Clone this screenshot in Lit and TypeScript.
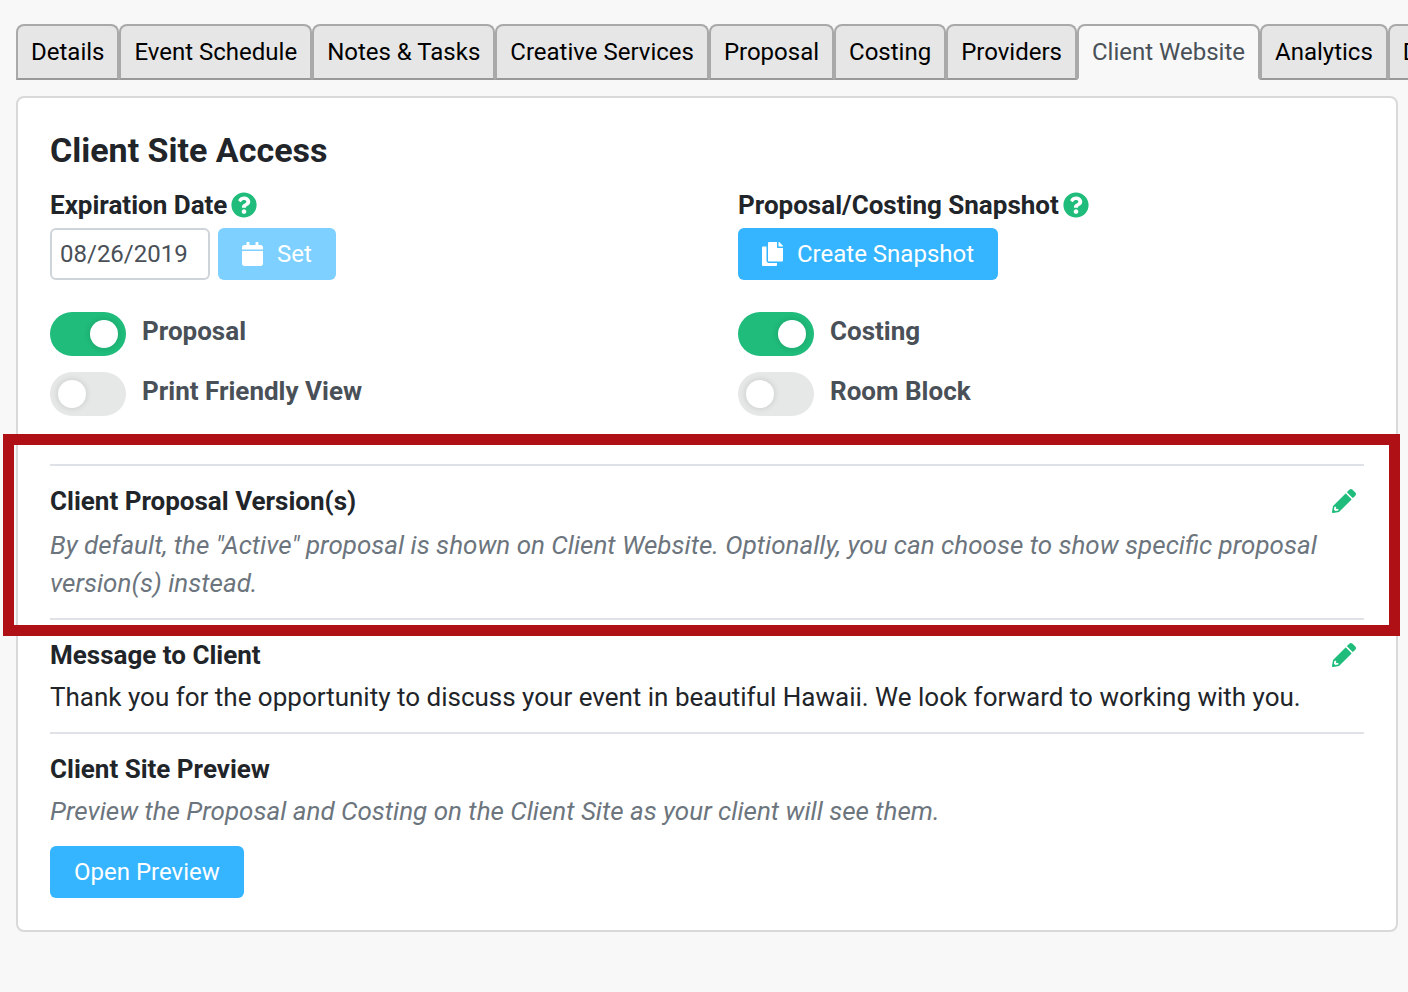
import { LitElement, html, css, svg } from "lit";
import { customElement, property, state } from "lit/decorators.js";
import { classMap } from "lit/directives/class-map.js";

const icons = {
  help: {
    box: "0 0 512 512",
    d: "M504 256c0 136.997-111.043 248-248 248S8 392.997 8 256C8 119.083 119.043 8 256 8s248 111.083 248 248zM262.655 90c-54.497 0-89.255 22.957-116.549 63.758-3.536 5.286-2.353 12.415 2.715 16.258l34.699 26.31c5.205 3.947 12.621 3.008 16.665-2.122 17.864-22.658 30.113-35.797 57.303-35.797 20.429 0 45.698 13.148 45.698 32.958 0 14.976-12.363 22.667-32.534 33.976C247.128 238.528 216 254.941 216 296v4c0 6.627 5.373 12 12 12h56c6.627 0 12-5.373 12-12v-1.333c0-28.462 83.186-29.647 83.186-106.667 0-58.002-60.165-102-116.531-102zM256 338c-25.365 0-46 20.635-46 46 0 25.364 20.635 46 46 46s46-20.636 46-46c0-25.365-20.635-46-46-46z",
  },
  calendar: {
    box: "0 0 448 512",
    d: "M12 192h424c6.6 0 12 5.4 12 12v260c0 26.5-21.5 48-48 48H48c-26.5 0-48-21.5-48-48V204c0-6.6 5.4-12 12-12zm436-44v-36c0-26.5-21.5-48-48-48h-48V12c0-6.6-5.4-12-12-12h-40c-6.6 0-12 5.4-12 12v52H160V12c0-6.6-5.4-12-12-12h-40c-6.6 0-12 5.4-12 12v52H48C21.5 64 0 85.5 0 112v36c0 6.6 5.4 12 12 12h424c6.6 0 12-5.4 12-12z",
  },
  copy: {
    box: "0 0 448 512",
    d: "M320 448v40c0 13.255-10.745 24-24 24H24c-13.255 0-24-10.745-24-24V120c0-13.255 10.745-24 24-24h72v296c0 30.879 25.121 56 56 56h168zm0-344V0H152c-13.255 0-24 10.745-24 24v368c0 13.255 10.745 24 24 24h272c13.255 0 24-10.745 24-24V128H344c-13.2 0-24-10.8-24-24zm120.971-31.029L375.029 7.029A24 24 0 0 0 358.059 0H352v96h96v-6.059a24 24 0 0 0-7.029-16.97z",
  },
  pencil: {
    box: "0 0 512 512",
    d: "M497.9 142.1l-46.1 46.1c-4.7 4.7-12.3 4.7-17 0l-111-111c-4.7-4.7-4.7-12.3 0-17l46.1-46.1c18.7-18.7 49.1-18.7 67.9 0l60.1 60.1c18.8 18.7 18.8 49.1 0 67.9zM284.2 99.8L21.6 362.4.4 483.9c-2.9 16.4 11.4 30.6 27.8 27.8l121.5-21.3 262.6-262.6c4.7-4.7 4.7-12.3 0-17l-111-111c-4.8-4.7-12.4-4.7-17.1 0zM88 424h48v36.3l-64.5 11.3-31.1-31.1L51.7 376H88v48z",
  },
};

const icon = (name: keyof typeof icons) => html`<svg
  class="icon ${name}"
  viewBox=${icons[name].box}
  aria-hidden="true"
>
  ${svg`<path fill="currentColor" fill-rule="evenodd" d=${icons[name].d}></path>`}
</svg>`;

@customElement("toggle-switch")
class ToggleSwitch extends LitElement {
  @property() label = "";
  @property({ type: Boolean }) checked = false;

  static styles = css`
    :host {
      display: block;
    }
    .row {
      display: flex;
      gap: 16px;
      width: fit-content;
      height: 44px;
      cursor: pointer;
    }
    .input {
      appearance: none;
      flex: none;
      display: flex;
      align-items: center;
      box-sizing: border-box;
      width: 76px;
      height: 44px;
      margin: 0;
      padding: 0 8px;
      border-radius: 22px;
      background: #e6e8e8;
      cursor: pointer;
    }
    .input::before {
      content: "";
      width: 28px;
      height: 28px;
      border-radius: 50%;
      background: #fff;
      box-shadow: 0 0 6px rgba(0, 0, 0, 0.15);
    }
    .input:checked {
      justify-content: flex-end;
      background: #1fbc7b;
    }
    .text {
      color: #495057;
      font-weight: 700;
      line-height: 38px;
    }
  `;

  private flip(e: Event) {
    this.checked = (e.target as HTMLInputElement).checked;
  }

  render() {
    return html`<label class="row">
      <input
        class="input"
        type="checkbox"
        role="switch"
        .checked=${this.checked}
        @change=${this.flip}
      />
      <span class="text">${this.label}</span>
    </label>`;
  }
}

@customElement("app-root")
class AppRoot extends LitElement {
  @state() private active = "Client Website";

  private tabs = [
    "Details",
    "Event Schedule",
    "Notes & Tasks",
    "Creative Services",
    "Proposal",
    "Costing",
    "Providers",
    "Client Website",
    "Analytics",
    "Documents",
  ];

  static styles = css`
    :host {
      display: block;
      box-sizing: border-box;
      min-height: 100vh;
      padding: 24px 0 32px 16px;
      overflow: hidden;
      background: #f8f8f8;
      color: #212529;
      font-family: Roboto, "Liberation Sans", sans-serif;
      font-size: 26px;
      line-height: 38px;
    }
    .tabs {
      display: flex;
      overflow: hidden;
    }
    .tab {
      flex: none;
      box-sizing: border-box;
      height: 56px;
      padding: 0 13px;
      border: 2px solid #a9a9a9;
      border-bottom-color: #999;
      border-radius: 8px 8px 0 0;
      background: #e6e6e6;
      color: #000;
      font: inherit;
      font-size: 24px;
      cursor: pointer;
    }
    .tab.active {
      border-bottom-color: transparent;
      background: #f8f8f8;
      color: #495057;
    }
    .card {
      margin: 16px 10px 0 0;
      padding: 32px;
      border: 2px solid #d9d9d9;
      border-radius: 8px;
      background: #fff;
    }
    .title {
      margin: 0 0 16px;
      font-size: 34px;
      font-weight: 700;
      line-height: 40px;
    }
    .columns {
      display: grid;
      grid-template-columns: 1fr 1fr;
      column-gap: 62px;
    }
    .field {
      display: flex;
      align-items: center;
      gap: 4px;
      height: 38px;
      margin-bottom: 4px;
      font-weight: 700;
    }
    .icon {
      display: block;
      flex: none;
    }
    .help {
      width: 26px;
      height: 26px;
      color: #1fbc7b;
    }
    .calendar,
    .copy {
      width: 21px;
      height: 24px;
    }
    .pencil {
      width: 24px;
      height: 24px;
    }
    .controls {
      display: flex;
      gap: 8px;
    }
    .date {
      box-sizing: border-box;
      width: 160px;
      height: 52px;
      padding: 0 8px;
      border: 2px solid #ced4da;
      border-radius: 6px;
      background: #fff;
      color: #495057;
      font: inherit;
      font-size: 24px;
    }
    .button {
      display: flex;
      align-items: center;
      gap: 14px;
      height: 52px;
      padding: 0 24px;
      border: 0;
      border-radius: 6px;
      background: #35b5ff;
      color: #fff;
      font: inherit;
      font-size: 24px;
      cursor: pointer;
    }
    .button:disabled {
      background: #7dd0ff;
      cursor: default;
    }
    .toggles {
      display: grid;
      row-gap: 16px;
      margin: 32px 0 48px;
    }
    .section {
      position: relative;
      padding: 16px 0;
      border-top: 2px solid #dee2e6;
    }
    .section:last-child {
      padding-bottom: 0;
    }
    .head {
      display: flex;
      align-items: center;
      justify-content: space-between;
      margin-bottom: 4px;
    }
    .marked .head {
      margin-bottom: 6px;
    }
    .heading {
      margin: 0;
      font-size: 26px;
      font-weight: 700;
      line-height: 38px;
    }
    .edit {
      padding: 0 8px;
      border: 0;
      background: none;
      color: #1fbc7b;
      cursor: pointer;
    }
    .copytext {
      margin: 0;
    }
    .hint {
      color: #6c757d;
      font-style: italic;
    }
    .preview {
      margin-top: 16px;
    }
    .frame {
      position: absolute;
      inset: -32px -36px -18px -47px;
      border: 11px solid #af1015;
      pointer-events: none;
    }
  `;

  private section(title: string, body: unknown, editable = true, marked = false) {
    return html`<section class=${classMap({ section: true, marked })}>
      <div class="head">
        <h2 class="heading">${title}</h2>
        ${editable
          ? html`<button class="edit" aria-label="Edit ${title}">${icon("pencil")}</button>`
          : ""}
      </div>
      ${body} ${marked ? html`<div class="frame"></div>` : ""}
    </section>`;
  }

  render() {
    return html`
      <nav class="tabs" role="tablist">
        ${this.tabs.map(
          (t) => html`<button
            role="tab"
            aria-selected=${t === this.active}
            class=${classMap({ tab: true, active: t === this.active })}
            @click=${() => (this.active = t)}
          >${t}</button>`
        )}
      </nav>
      <main class="card">
        <h1 class="title">Client Site Access</h1>
        <div class="columns">
          <div>
            <div class="field"><label for="date">Expiration Date</label>${icon("help")}</div>
            <div class="controls">
              <input id="date" class="date" type="text" value="08/26/2019" />
              <button class="button" disabled>${icon("calendar")}Set</button>
            </div>
            <div class="toggles">
              <toggle-switch label="Proposal" checked></toggle-switch>
              <toggle-switch label="Print Friendly View"></toggle-switch>
            </div>
          </div>
          <div>
            <div class="field">Proposal/Costing Snapshot${icon("help")}</div>
            <div class="controls">
              <button class="button">${icon("copy")}Create Snapshot</button>
            </div>
            <div class="toggles">
              <toggle-switch label="Costing" checked></toggle-switch>
              <toggle-switch label="Room Block"></toggle-switch>
            </div>
          </div>
        </div>
        ${this.section(
          "Client Proposal Version(s)",
          html`<p class="copytext hint">
            By default, the "Active" proposal is shown on Client Website. Optionally, you can
            choose to show specific proposal version(s) instead.
          </p>`,
          true,
          true
        )}
        ${this.section(
          "Message to Client",
          html`<p class="copytext">
            Thank you for the opportunity to discuss your event in beautiful Hawaii. We look
            forward to working with you.
          </p>`
        )}
        ${this.section(
          "Client Site Preview",
          html`<p class="copytext hint">
              Preview the Proposal and Costing on the Client Site as your client will see them.
            </p>
            <button class="button preview">Open Preview</button>`,
          false
        )}
      </main>
    `;
  }
}
